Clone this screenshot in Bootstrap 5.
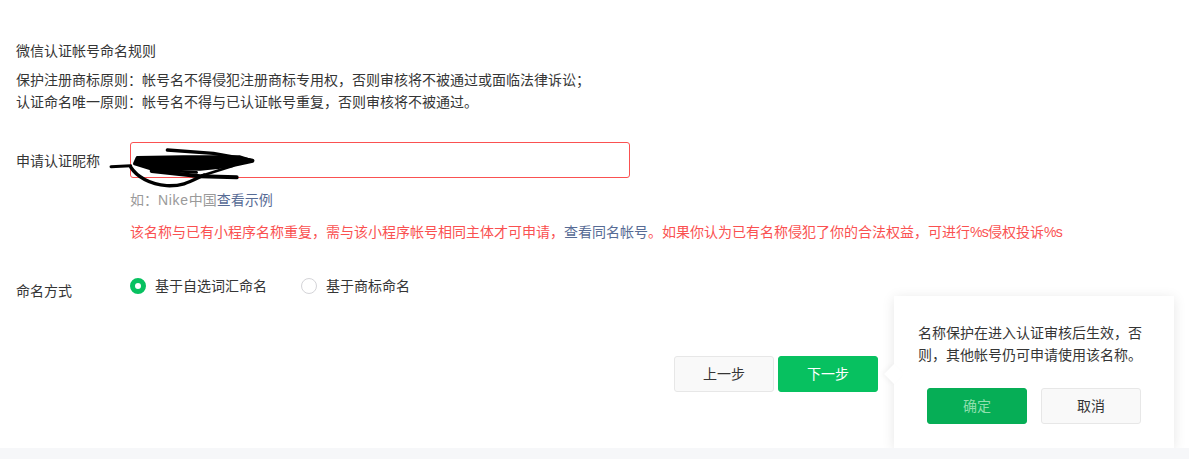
<!DOCTYPE html>
<html lang="zh-CN">
<head>
    <meta charset="UTF-8">
    <title>微信认证帐号命名</title>
    <link href="https://cdn.jsdelivr.net/npm/bootstrap@5.3.0/dist/css/bootstrap.min.css" rel="stylesheet">
    <style>
        body {
            background-color: #f6f7f9;
            font-family: "Liberation Sans", "Noto Sans CJK SC", sans-serif;
            font-size: 14px;
            color: #353535;
            overflow: hidden;
        }
        .page-main {
            position: relative;
            height: 448px;
            background-color: #fff;
            padding: 40px 16px 0;
            box-shadow: 0 1px 2px rgba(0, 0, 0, .05);
        }
        .rule-title { line-height: 22px; margin-bottom: 7px; }
        .rule-text { line-height: 22px; margin: 0; }
        .field-name { width: 114px; flex-shrink: 0; }
        .name-row { margin-top: 29px; }
        .name-row .field-name { padding-top: 8px; line-height: 22px; }
        .name-box { position: relative; width: 500px; }
        .name-input {
            height: 36px;
            padding: 0 10px;
            border: 1px solid #fa5151;
            border-radius: 3px;
            box-shadow: none;
        }
        .scribble { position: absolute; left: -30px; top: -7px; }
        .hint-text { color: #9a9a9a; line-height: 22px; margin-top: 11px; }
        .wide-latin { letter-spacing: .7px; }
        .tight-latin { letter-spacing: -.75px; }
        .error-text { color: #fa5151; line-height: 22px; margin-top: 10px; white-space: nowrap; }
        .plain-link { color: #576b95; text-decoration: none; }
        .type-row { margin-top: 30px; height: 40px; }
        .type-row .field-name { padding-top: 7px; line-height: 22px; }
        .type-option { line-height: 22px; margin-right: 34px; margin-top: 2px; }
        .radio-dot {
            width: 16px;
            height: 16px;
            margin-right: 9px;
            border-radius: 50%;
            border: 1px solid #d4d4d8;
            background-color: #fff;
        }
        .radio-dot.is-on { border: 5px solid #07c160; }
        .btn-step {
            width: 100px;
            height: 36px;
            padding: 0;
            font-size: 14px;
            line-height: 34px;
            border-radius: 3px;
            background-color: #f9f9f9;
            border: 1px solid #e7e7e7;
            color: #353535;
        }
        .btn-step.is-green { background-color: #07c160; border-color: #07c160; color: #fff; }
        .btn-step.is-dark { background-color: #06ae56; border-color: #06ae56; color: #8fdfae; }
        .step-row { margin-top: 43px; margin-right: 295px; }
        .confirm-pop {
            position: absolute;
            left: 894px;
            top: 296px;
            width: 280px;
            height: 152px;
            padding: 26px 33px 24px 24px;
            background-color: #fff;
            box-shadow: 0 2px 12px rgba(0, 0, 0, .1);
        }
        .confirm-pop::before {
            content: "";
            position: absolute;
            left: -7px;
            top: 71px;
            width: 14px;
            height: 14px;
            background-color: #fff;
            transform: rotate(45deg);
            box-shadow: -2px 2px 5px rgba(0, 0, 0, .04);
        }
        .confirm-text { line-height: 22px; margin: 0 -9px 0 0; position: relative; }
        .confirm-btns { gap: 14px; margin-top: 22px; margin-left: 9px; }
    </style>
</head>
<body>
    <div class="page-main">
        <div class="rule-title">微信认证帐号命名规则</div>
        <p class="rule-text">保护注册商标原则：帐号名不得侵犯注册商标专用权，否则审核将不被通过或面临法律诉讼；</p>
        <p class="rule-text">认证命名唯一原则：帐号名不得与已认证帐号重复，否则审核将不被通过。</p>

        <div class="d-flex name-row">
            <div class="field-name">申请认证昵称</div>
            <div>
                <div class="name-box">
                    <input type="text" class="form-control name-input">
                    <!-- 昵称被涂抹的部分 -->
                    <svg class="scribble" width="180" height="60" viewBox="0 0 540 180" fill="none" stroke="#000" stroke-linecap="round" stroke-linejoin="round">
                        <path d="M33 95 L92 92" stroke-width="9"/>
                        <path d="M104 86 L112 68 L250 66 L420 66 L458 78 L385 94 L300 102 L150 100 Z" fill="#000" stroke-width="10"/>
                        <path d="M202 45 L340 55 L458 76" stroke-width="10"/>
                        <path d="M155 108 L300 124 L410 127" stroke-width="12"/>
                        <path d="M165 104 L290 112" stroke-width="8"/>
                        <path d="M300 124 L400 92" stroke-width="8"/>
                        <path d="M92 96 C110 125 150 148 200 152 C250 154 270 140 312 120" stroke-width="10"/>
                    </svg>
                </div>
                <div class="hint-text">如：<span class="wide-latin">Nike</span>中国<a href="#" class="plain-link">查看示例</a></div>
                <div class="error-text">该名称与已有小程序名称重复，需与该小程序帐号相同主体才可申请，<a href="#" class="plain-link">查看同名帐号</a>。如果你认为已有名称侵犯了你的合法权益，可进行<span class="tight-latin">%s</span>侵权投诉<span class="tight-latin">%s</span></div>
            </div>
        </div>

        <div class="d-flex align-items-start type-row">
            <div class="field-name">命名方式</div>
            <div class="d-flex align-items-center type-option">
                <span class="radio-dot is-on"></span>基于自选词汇命名
            </div>
            <div class="d-flex align-items-center type-option">
                <span class="radio-dot"></span>基于商标命名
            </div>
        </div>

        <div class="d-flex justify-content-end gap-1 step-row">
            <button type="button" class="btn btn-step">上一步</button>
            <button type="button" class="btn btn-step is-green">下一步</button>
        </div>

        <div class="confirm-pop">
            <p class="confirm-text">名称保护在进入认证审核后生效，否则，其他帐号仍可申请使用该名称。</p>
            <div class="d-flex confirm-btns">
                <button type="button" class="btn btn-step is-dark">确定</button>
                <button type="button" class="btn btn-step">取消</button>
            </div>
        </div>
    </div>
    <script src="https://cdn.jsdelivr.net/npm/bootstrap@5.3.0/dist/js/bootstrap.bundle.min.js"></script>
</body>
</html>
